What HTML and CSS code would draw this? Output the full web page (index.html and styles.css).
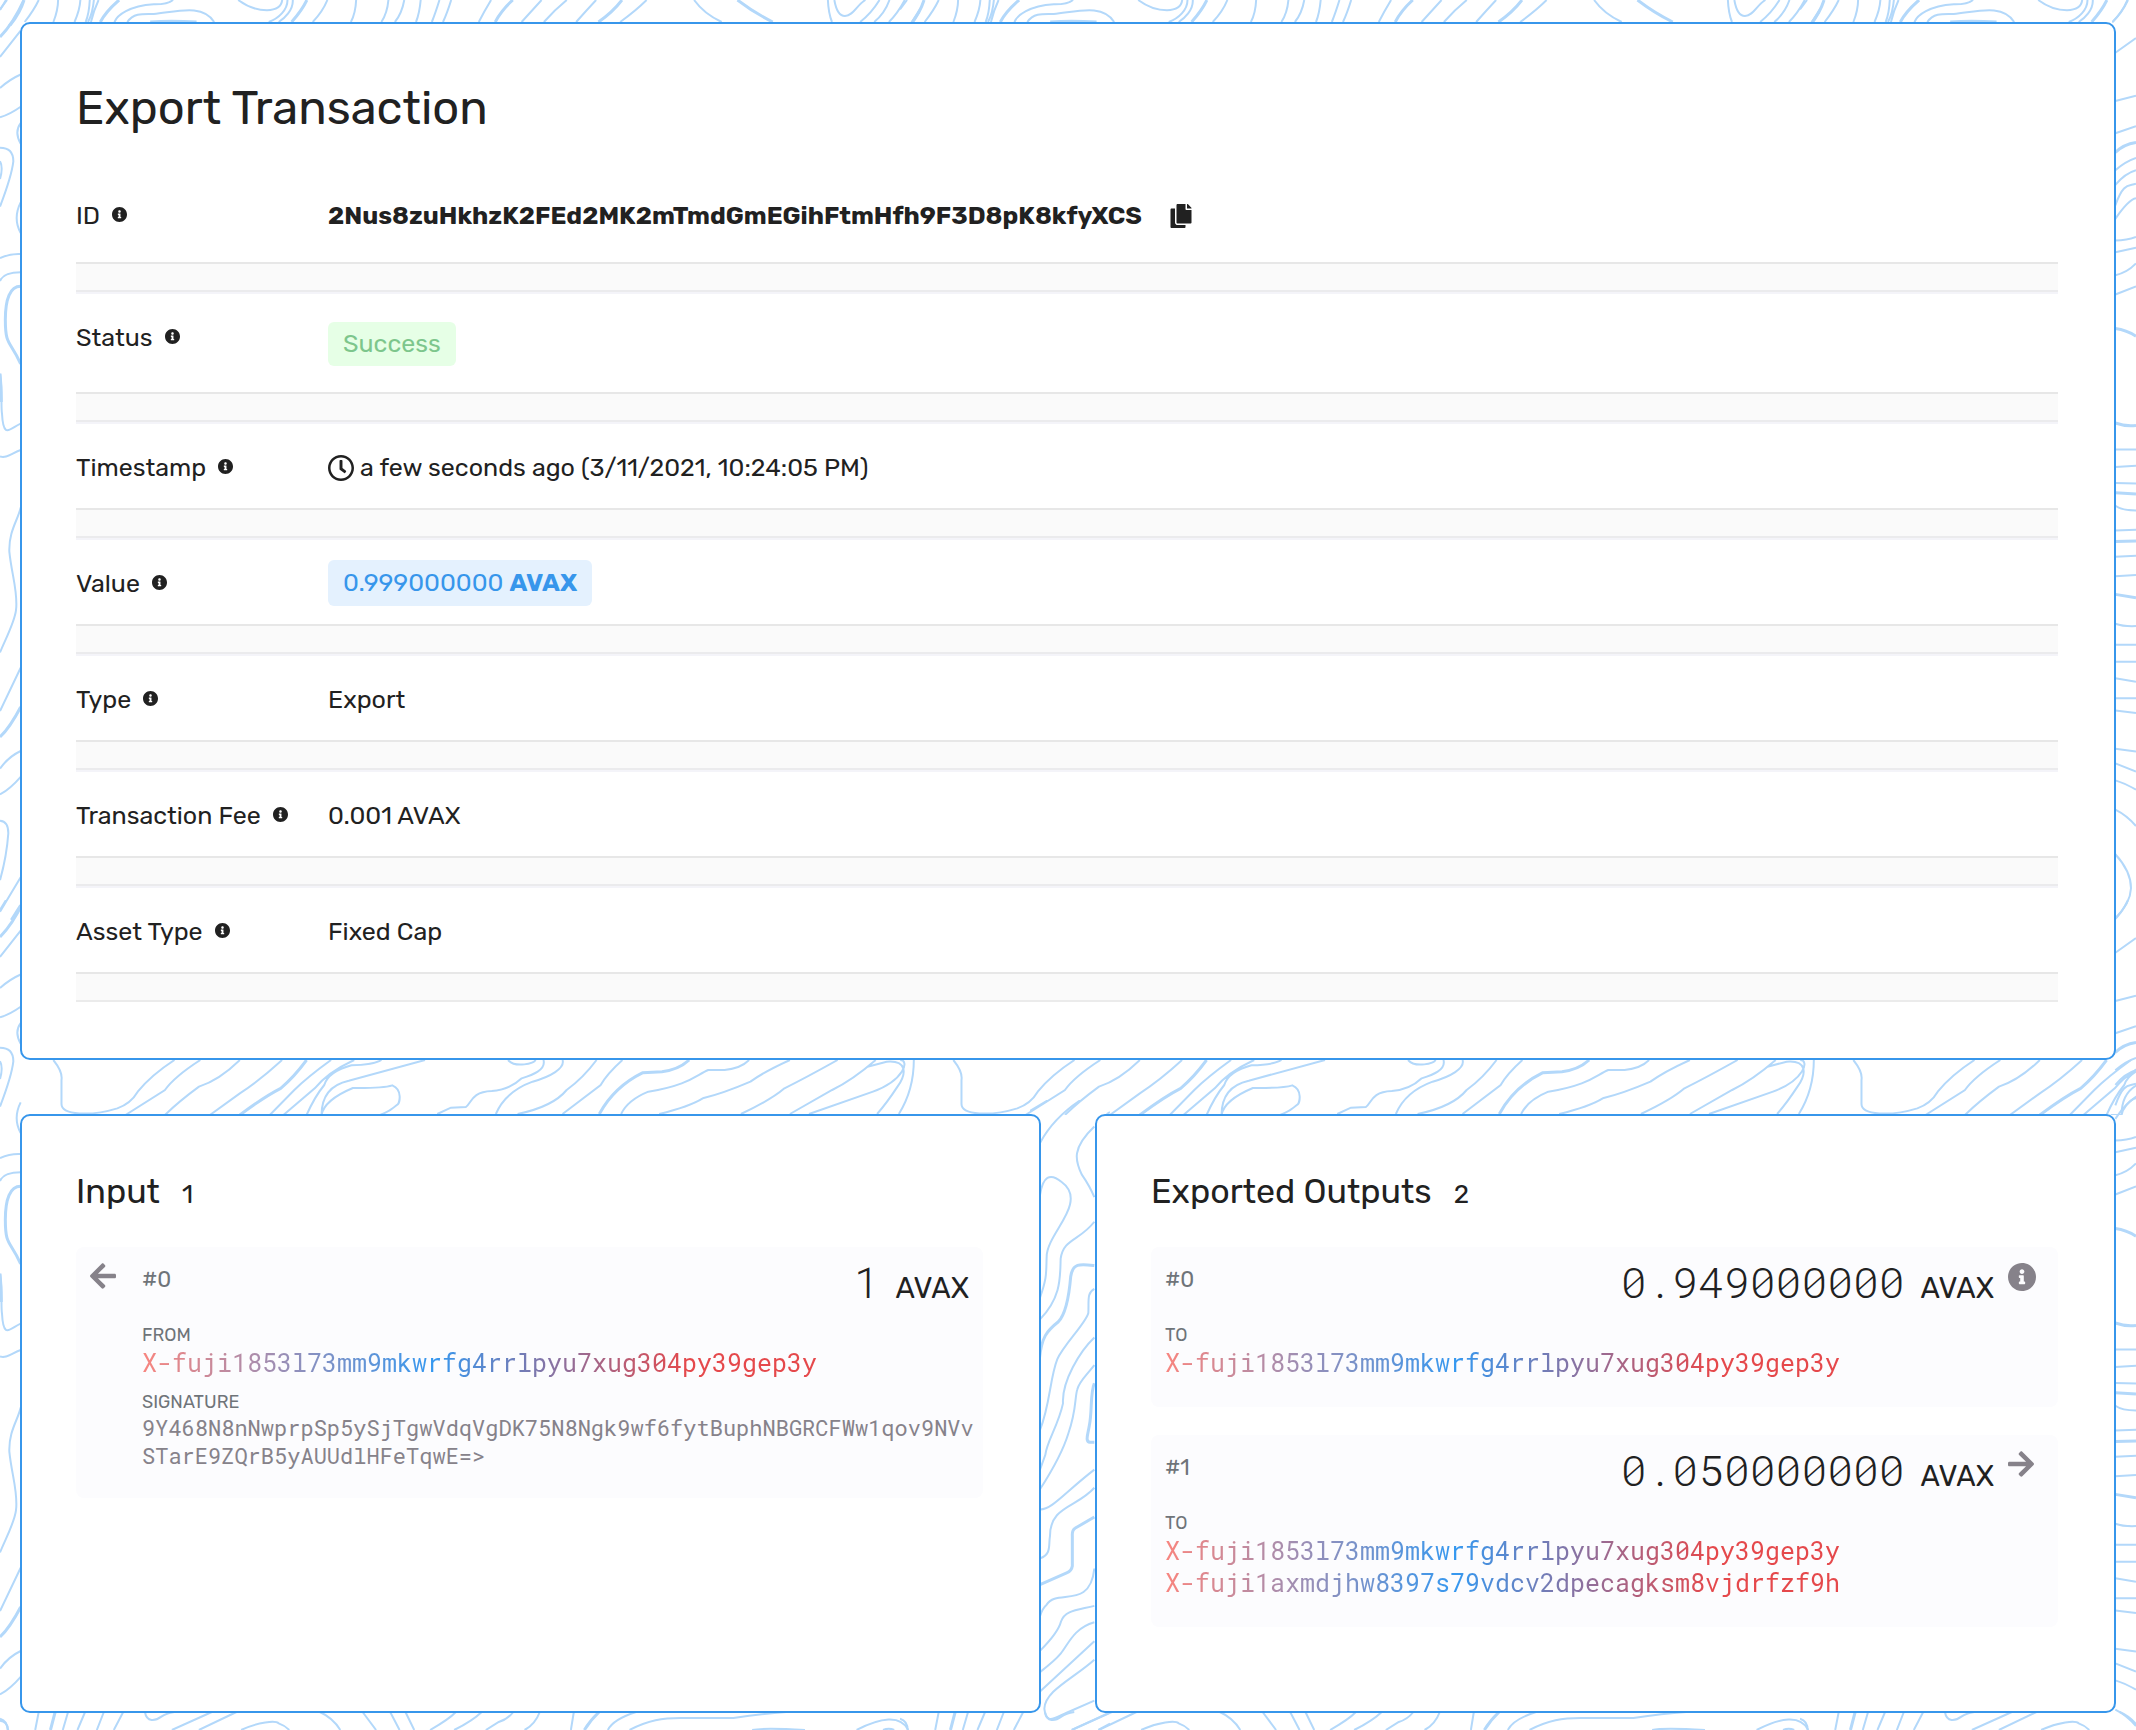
FILE: index.html
```html
<!DOCTYPE html>
<html lang="en">
<head>
<meta charset="utf-8">
<meta name="viewport" content="width=device-width, initial-scale=1">
<title>Export Transaction</title>
<link rel="stylesheet" href="styles.css">
</head>
<body>
<svg class="contours" width="2136" height="1730" aria-hidden="true">
  <defs>
    <symbol id="c-top" viewBox="0 0 1568 78" preserveAspectRatio="none">
      <path d="M12 0L0 28M66 0Q58 30 42 66M99 0Q99 30 91 66M137 0Q136 30 127 66M153 0Q152 40 146 66M160 0Q158 40 150 66M168 0Q160 30 155 66M295 0Q285 14 262 13C220 18 200 45 195 66M217 66C228 38 245 42 262 42C300 36 345 10 365 66M406 0C425 25 440 31 455 31C475 30 480 15 481 0M490 0C490 30 475 55 458 66M499 0C500 30 485 55 475 66M558 0Q550 35 533 66M607 0Q606 40 598 66M662 0Q660 40 650 66M689 0Q685 40 673 66M717 0Q715 40 709 66M749 0Q742 40 736 66M769 0Q762 40 755 66M837 0Q825 35 816 66M923 0Q905 35 889 66M966 0Q945 30 927 66M1016 0Q1000 30 982 66M1102 0Q1085 30 1057 66M1183 0Q1200 42 1230 66M1411 0Q1412 40 1418 66M1422 0C1425 30 1430 48 1440 48C1455 47 1460 15 1475 0M1499 0Q1485 40 1466 66M1516 0Q1508 40 1490 66M1542 0Q1530 40 1515 66"/>
      <path class="bold" d="M41 0Q34 40 16 78M203 0Q180 35 171 66M256 66Q290 61 335 66M523 0Q515 30 497 66M874 0Q855 30 844 66M1060 0Q1045 35 1020 66M1257 0Q1285 38 1317 66M1568 30L1555 66"/>
    </symbol>
    <symbol id="c-bottom" viewBox="0 0 1568 72" preserveAspectRatio="none">
      <path d="M0 38Q13 45 13 72M66 18L60 72M116 18L107 72M145 18L132 72M177 18L165 72M210 18L194 72M247 18C250 50 265 45 275 32Q283 22 297 18M361 18L293 72M403 18L339 72M411 72C440 48 470 42 475 52Q485 58 493 72M545 18Q567 35 580 72M618 18L641 72M665 18L681 72M691 18L706 72M777 18Q765 40 733 72M821 18Q805 45 774 72M875 18Q865 40 850 48L828 72M920 18Q912 55 894 72M978 18L973 72M1084 18Q1045 40 1036 72M1073 72C1105 42 1130 36 1160 36H1250Q1300 23 1340 18M1282 72Q1300 65 1372 72M1460 72C1500 35 1535 25 1548 72M1505 72Q1515 65 1524 72"/>
      <path class="bold" d="M94 18L86 72M1021 18Q1005 45 996 72"/>
    </symbol>
    <symbol id="c-gap" viewBox="0 0 661 165" preserveAspectRatio="none">
      <path d="M23 0Q30 35 29 60V132C29 165 50 170 70 145Q80 130 85 95Q95 45 112 0M131 0Q112 50 105 90L76 165M160 0Q145 60 130 80Q115 125 105 165M191 0Q175 60 160 100L138 165M227 0Q210 50 200 90L182 165M244 0Q225 35 215 85L192 165M264 0Q258 15 242 16Q225 35 222 75Q215 110 209 165M296 0Q255 45 240 62Q220 80 220 165L212 165M220 165Q222 120 243 84Q265 85 272 76C280 90 277 130 276 133Q270 155 263 165M357 0C362 25 377 10 377 0M383 0C385 30 375 45 367 55Q358 90 345 93C330 95 330 130 326 141L315 143L305 162M397 0C399 25 388 50 375 65Q355 95 348 162M422 0Q412 55 400 90Q390 140 364 162M441 0Q430 40 425 75L397 162M534 0Q528 25 516 30H504C495 45 490 75 460 95Q445 120 440 162M564 0Q545 35 535 65Q515 100 500 115Q490 140 468 162M599 0Q575 55 560 85Q550 120 528 162M627 0Q610 60 595 90L564 162M645 0C652 0 648 60 625 95L578 162M621 20L635 5C650 0 650 40 643 80Q635 130 628 162M655 0Q655 90 644 162"/>
      <path class="bold" d="M209 0Q200 50 190 85Q178 110 160 165M490 0Q482 30 470 35L456 38Q435 80 424 162"/>
    </symbol>
    <symbol id="c-left" viewBox="0 0 72 1568" preserveAspectRatio="none">
      <path d="M0 17L18 0M0 97L62 52M0 150Q30 135 62 127M0 200Q30 195 62 182M62 210Q42 225 62 245M0 252Q40 252 40 275Q35 300 0 352M0 275Q10 285 0 305M62 345Q38 372 62 397M0 440Q30 432 62 433M0 479Q10 464 62 464M0 637C8 670 2 690 6 705C10 750 30 730 62 722M0 778C20 782 35 772 62 767M62 865C55 885 26 905 28 940C35 980 55 1010 48 1040C44 1060 20 1085 0 1112M62 1138L0 1212M0 1310Q25 1290 62 1280M0 1354Q30 1345 62 1324M0 1399Q25 1400 25 1420Q20 1460 0 1500M0 1554L62 1495"/>
      <path class="bold" d="M0 63Q40 40 72 0M62 488C30 488 16 510 16 545C16 590 30 580 62 620M0 1256Q30 1240 62 1205M34 1568L62 1543M0 637Q4 660 4 685"/>
    </symbol>
    <symbol id="c-right" viewBox="0 0 72 1568" preserveAspectRatio="none">
      <path d="M0 38Q30 22 48 0M10 90L72 65M10 172L72 163M10 227L72 215M10 290Q40 275 72 269M10 315Q40 295 72 290M10 350C35 310 50 318 72 313M10 373Q50 340 72 338M10 410Q45 410 72 404M10 430L72 422M10 469Q45 465 72 449M10 502L72 488M10 766H72M10 796L72 794M10 823L72 824M10 862Q30 870 72 870M10 904L72 903M10 949L72 947M10 982L72 980M10 1063Q35 1068 72 1067M10 1099H72M10 1128H72M10 1156L72 1162M10 1190H72M10 1211L72 1215M10 1276L72 1281M10 1301L72 1315M10 1330Q40 1335 72 1346M10 1380Q45 1390 72 1408M10 1456Q57 1485 57 1514Q55 1540 10 1565"/>
      <path class="bold" d="M10 260Q35 246 72 243M10 560Q45 563 72 573M10 721Q40 727 72 725M10 840L72 842M10 923L72 922M10 1013L72 1019"/>
    </symbol>
    <symbol id="c-middle" viewBox="0 0 240 1568" preserveAspectRatio="none">
      <path d="M0 27L55 0M30 107Q70 45 152 0M30 237C38 190 60 180 95 204Q130 225 120 260C110 300 50 350 50 390C48 430 52 440 30 492M193 66C125 120 135 150 155 185Q180 215 193 242M193 303C150 350 100 345 92 395C90 440 95 490 30 546M193 470C170 480 177 500 175 530C168 555 100 610 82 645C60 690 60 760 30 821M193 591C150 625 95 700 99 755C85 810 50 850 46 883L30 920M193 660C170 685 148 700 142 720C134 740 140 770 115 830Q95 885 30 969M30 1019C65 1020 100 980 193 920M193 965C140 1015 60 1010 60 1085C55 1110 65 1130 30 1141M193 1166C180 1270 80 1215 50 1256Q37 1265 30 1285M193 1259C140 1270 105 1270 93 1298Q85 1325 30 1371M193 1300C130 1315 115 1355 92 1378Q75 1395 30 1424M193 1347L30 1472M193 1393C130 1440 45 1470 43 1515C48 1555 70 1540 110 1525L193 1495M125 1568L240 1524M205 1568L240 1552M230 35L240 30"/>
      <path class="bold" d="M193 412C150 408 128 405 122 440C118 480 110 530 85 552C50 575 35 590 28 645M193 705C180 730 187 775 178 810C173 835 165 850 180 852H193M193 1038L135 1066Q126 1070 127 1085V1160Q125 1172 110 1177L30 1206"/>
    </symbol>
  </defs>
  <g class="contour-lines">
    <use href="#c-top" width="920" height="26"/>
    <use href="#c-top" x="900" width="920" height="26"/>
    <use href="#c-top" x="1800" width="920" height="26"/>
    <use href="#c-gap" x="22" y="1060" width="900" height="55"/>
    <use href="#c-gap" x="922" y="1060" width="900" height="55"/>
    <use href="#c-gap" x="1822" y="1060" width="900" height="55"/>
    <use href="#c-bottom" y="1706" width="920" height="24"/>
    <use href="#c-bottom" x="900" y="1706" width="920" height="24"/>
    <use href="#c-bottom" x="1800" y="1706" width="920" height="24"/>
    <use href="#c-left" width="24" height="920"/>
    <use href="#c-left" y="900" width="24" height="920"/>
    <use href="#c-right" x="2112" width="24" height="920"/>
    <use href="#c-right" x="2112" y="900" width="24" height="920"/>
    <use href="#c-middle" x="1030" y="1100" width="80" height="630"/>
  </g>
</svg>
<svg class="sprite" aria-hidden="true">
  <symbol id="i-info" viewBox="8 8 496 496"><path d="M256 8C119.043 8 8 119.083 8 256c0 136.997 111.043 248 248 248s248-111.003 248-248C504 119.083 392.957 8 256 8zm0 110c23.196 0 42 18.804 42 42s-18.804 42-42 42-42-18.804-42-42 18.804-42 42-42zm56 254c0 6.627-5.373 12-12 12h-88c-6.627 0-12-5.373-12-12v-24c0-6.627 5.373-12 12-12h12v-64h-12c-6.627 0-12-5.373-12-12v-24c0-6.627 5.373-12 12-12h64c6.627 0 12 5.373 12 12v100h12c6.627 0 12 5.373 12 12v24z"/></symbol>
  <symbol id="i-copy" viewBox="0 0 448 512"><path d="M320 448v40c0 13.255-10.745 24-24 24H24c-13.255 0-24-10.745-24-24V120c0-13.255 10.745-24 24-24h72v296c0 30.879 25.121 56 56 56h168zm0-344V0H152c-13.255 0-24 10.745-24 24v368c0 13.255 10.745 24 24 24h272c13.255 0 24-10.745 24-24V128H344c-13.2 0-24-10.8-24-24zm120.971-31.029L375.029 7.029A24 24 0 0 0 358.059 0H352v96h96v-6.059a24 24 0 0 0-7.029-16.97z"/></symbol>
  <symbol id="i-clock" viewBox="8 8 496 496"><path d="M256 8C119 8 8 119 8 256s111 248 248 248 248-111 248-248S393 8 256 8zm0 448c-110.500 0-200-89.500-200-200S145.500 56 256 56s200 89.500 200 200-89.500 200-200 200zm61.800-104.400l-84.900-61.700c-3.100-2.300-4.900-5.900-4.900-9.700V116c0-6.600 5.400-12 12-12h32c6.600 0 12 5.400 12 12v141.700l66.800 48.600c5.400 3.900 6.500 11.400 2.600 16.800L334.600 349c-3.900 5.300-11.400 6.500-16.800 2.600z"/></symbol>
  <symbol id="i-left" viewBox="0 32 448 448"><path d="M257.500 445.100l-22.200 22.200c-9.400 9.400-24.600 9.400-33.900 0L7 273c-9.400-9.400-9.400-24.600 0-33.900L201.400 44.700c9.400-9.400 24.600-9.400 33.900 0l22.200 22.200c9.500 9.500 9.300 25-.4 34.300L136.600 216H424c13.300 0 24 10.700 24 24v32c0 13.300-10.700 24-24 24H136.600l120.500 114.800c9.800 9.300 10 24.800.4 34.300z"/></symbol>
  <symbol id="i-right" viewBox="0 32 448 448"><path d="M190.500 66.900l22.200-22.200c9.400-9.400 24.600-9.400 33.900 0L441 239c9.400 9.400 9.400 24.600 0 33.900L246.600 467.300c-9.400 9.400-24.600 9.400-33.900 0l-22.200-22.200c-9.500-9.500-9.300-25 .4-34.300L311.400 296H24c-13.300 0-24-10.700-24-24v-32c0-13.300 10.700-24 24-24h287.400L190.900 101.200c-9.800-9.300-10-24.800-.4-34.300z"/></symbol>
</svg>

<main class="page">
  <section class="card">
    <h1 class="title">Export Transaction</h1>
    <dl class="facts">
      <div class="fact fact-id">
        <dt>ID <svg class="hint"><use href="#i-info"/></svg></dt>
        <dd><b>2Nus8zuHkhzK2FEd2MK2mTmdGmEGihFtmHfh9F3D8pK8kfyXCS</b><button class="copy" type="button" aria-label="Copy"><svg><use href="#i-copy"/></svg></button></dd>
      </div>
      <div class="fact">
        <dt>Status <svg class="hint"><use href="#i-info"/></svg></dt>
        <dd><span class="badge success">Success</span></dd>
      </div>
      <div class="fact">
        <dt>Timestamp <svg class="hint"><use href="#i-info"/></svg></dt>
        <dd class="time"><svg class="clock"><use href="#i-clock"/></svg>a few seconds ago (3/11/2021, 10:24:05 PM)</dd>
      </div>
      <div class="fact">
        <dt>Value <svg class="hint"><use href="#i-info"/></svg></dt>
        <dd><span class="badge value">0.999000000 <b>AVAX</b></span></dd>
      </div>
      <div class="fact">
        <dt>Type <svg class="hint"><use href="#i-info"/></svg></dt>
        <dd>Export</dd>
      </div>
      <div class="fact">
        <dt>Transaction Fee <svg class="hint"><use href="#i-info"/></svg></dt>
        <dd>0.001 AVAX</dd>
      </div>
      <div class="fact">
        <dt>Asset Type <svg class="hint"><use href="#i-info"/></svg></dt>
        <dd>Fixed Cap</dd>
      </div>
    </dl>
  </section>

  <div class="columns">
    <section class="card">
      <h2 class="subtitle">Input <span class="count">1</span></h2>
      <article class="utxo utxo-in">
        <svg class="arrow"><use href="#i-left"/></svg>
        <div class="body">
          <div class="head"><span class="index">#0</span><span class="amount">1 <span class="unit">AVAX</span></span></div>
          <h3 class="label">FROM</h3>
          <a class="address" href="#">X-fuji1853l73mm9mkwrfg4rrlpyu7xug304py39gep3y</a>
          <h3 class="label">SIGNATURE</h3>
          <p class="signature">9Y468N8nNwprpSp5ySjTgwVdqVgDK75N8Ngk9wf6fytBuphNBGRCFWw1qov9NVvSTarE9ZQrB5yAUUdlHFeTqwE=&gt;</p>
        </div>
      </article>
    </section>

    <section class="card">
      <h2 class="subtitle">Exported Outputs <span class="count">2</span></h2>
      <article class="utxo utxo-out">
        <div class="body">
          <div class="head"><span class="index">#0</span><span class="amount">0.949000000 <span class="unit">AVAX</span></span></div>
          <h3 class="label">TO</h3>
          <a class="address" href="#">X-fuji1853l73mm9mkwrfg4rrlpyu7xug304py39gep3y</a>
        </div>
        <svg class="spent"><use href="#i-info"/></svg>
      </article>
      <article class="utxo utxo-out">
        <div class="body">
          <div class="head"><span class="index">#1</span><span class="amount">0.050000000 <span class="unit">AVAX</span></span></div>
          <h3 class="label">TO</h3>
          <a class="address" href="#">X-fuji1853l73mm9mkwrfg4rrlpyu7xug304py39gep3y</a>
          <a class="address" href="#">X-fuji1axmdjhw8397s79vdcv2dpecagksm8vjdrfzf9h</a>
        </div>
        <svg class="arrow"><use href="#i-right"/></svg>
      </article>
    </section>
  </div>
</main>
</body>
</html>
```
FILE: styles.css
```css
:root {
  --blue: #3796eb;
  --ink: #212121;
  --muted: #6f7479;
  --gray: #86828a;
  --mono: "Roboto Mono", "Liberation Mono", monospace;
}

*, *::after { box-sizing: border-box; }

body {
  position: relative;
  margin: 0;
  overflow-x: hidden;
  background: #fff;
  color: var(--ink);
  font: 400 25px/36px Rubik, Roboto, sans-serif;
}

.contours {
  position: absolute;
  top: 0;
  left: 0;
  z-index: -1;
  overflow: hidden;
}
.contour-lines {
  fill: none;
  stroke: #b3d8fa;
  stroke-width: 2px;
}
.contours path { vector-effect: non-scaling-stroke; }
.contours .bold { stroke-width: 3px; }
.sprite { display: none; }
svg { fill: currentColor; }

.page {
  display: grid;
  gap: 54px;
  padding: 22px 20px 18px;
}
.columns {
  display: grid;
  grid-template-columns: 1fr 1fr;
  gap: 54px;
}
.card {
  min-width: 0;
  padding: 55px 56px 56px 54px;
  border: 2px solid var(--blue);
  border-radius: 10px;
  background: #fff;
}

.title {
  margin: 0 0 33px;
  font-size: 47px;
  font-weight: 400;
  line-height: 58px;
}

.facts { margin: 0; }
.fact {
  display: grid;
  grid-template-columns: 252px 1fr;
  padding-top: 26px;
}
.fact::after {
  content: "";
  grid-column: 1 / -1;
  height: 32px;
  margin-top: 22px;
  border-top: 2px solid #e7e7e7;
  border-bottom: 2px solid #f4f4f9;
  background: #fafafa;
  box-shadow: inset 0 -2px #ebebed;
}
.fact:last-child::after {
  height: 30px;
  border-bottom-color: #ebebeb;
  box-shadow: none;
}
.fact-id { padding-top: 28px; }
.fact-id::after { margin-top: 28px; }
dt, dd { margin: 0; }
dt { display: flex; align-items: center; gap: 12px; height: 36px; }
.hint { width: 15px; height: 15px; margin-bottom: 4px; }
.fact-id dd { display: flex; align-items: center; }
.copy {
  margin: 0 0 0 28px;
  padding: 0;
  border: 0;
  background: none;
  color: inherit;
}
.copy svg { display: block; width: 22px; height: 24px; }
.time { display: flex; align-items: center; gap: 6px; }
.clock { width: 26px; height: 26px; }
.badge {
  display: block;
  width: fit-content;
  padding: 0 15px;
  border-radius: 6px;
}
.success {
  margin: 2px 0 4px;
  background: #e6ffe6;
  color: #7dc68c;
  line-height: 44px;
}
.value {
  margin: -6px 0 -4px;
  background: #e4f1fe;
  color: var(--blue);
  line-height: 46px;
}

.subtitle {
  display: flex;
  align-items: baseline;
  gap: 22px;
  margin: 0 0 34px;
  font-size: 34px;
  font-weight: 400;
  line-height: 42px;
}
.count { font-size: 26px; line-height: 26px; }
.utxo {
  display: flex;
  align-items: flex-start;
  margin-bottom: 28px;
  padding: 5px 14px 28px;
  border-radius: 8px;
  background: #fcfcfe;
}
.utxo-in { gap: 26px; padding-right: 8px; }
.utxo-in .head { padding-right: 6px; }
.utxo-out { gap: 14px; padding-right: 22px; }
.body { flex: 1; min-width: 0; }
.arrow, .spent {
  flex: none;
  width: 26px;
  height: 26px;
  margin-top: 11px;
  color: var(--gray);
}
.spent { width: 28px; height: 28px; }
.utxo-out .arrow { margin-right: 2px; }
.head { display: flex; justify-content: space-between; }
.index { color: var(--muted); font-size: 22px; line-height: 56px; }
.amount {
  display: flex;
  align-items: baseline;
  gap: 16px;
  font: 300 43px/60px var(--mono);
}
.unit { font: 400 29px/29px Rubik, Roboto, sans-serif; }
.label {
  margin: 11px 0 0;
  color: var(--muted);
  font-size: 18px;
  font-weight: 400;
  line-height: 24px;
}
.address {
  display: block;
  width: fit-content;
  background: linear-gradient(90deg, #f8857f, #3598f0 43%, #e5484b 81%);
  background-clip: text;
  -webkit-background-clip: text;
  color: transparent;
  font: 400 25px/32px var(--mono);
  text-decoration: none;
}
.signature {
  margin: 0;
  color: var(--gray);
  font: 400 22px/28px var(--mono);
  word-break: break-all;
}
```
